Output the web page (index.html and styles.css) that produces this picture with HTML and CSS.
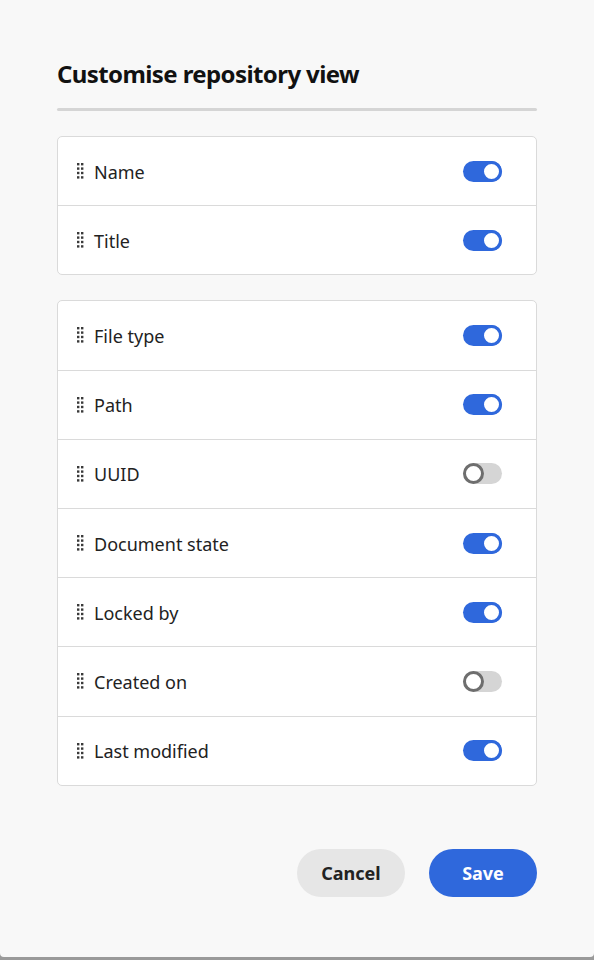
FILE: index.html
```html
<!DOCTYPE html>
<html lang="en">
<head>
<meta charset="utf-8">
<title>Customise repository view</title>
<link rel="stylesheet" href="styles.css">
</head>
<body>
<div class="dialog">
  <h1 class="title">Customise repository view</h1>
  <div class="divider"></div>
  <div class="list">
    <div class="row"><span class="handle"><svg width="7" height="16" viewBox="0 0 7 16"><g fill="#3a3a3a"><rect x="0" y="0" width="2.4" height="2.4"/><rect x="4" y="0" width="2.4" height="2.4"/><rect x="0" y="4.4" width="2.4" height="2.4"/><rect x="4" y="4.4" width="2.4" height="2.4"/><rect x="0" y="8.8" width="2.4" height="2.4"/><rect x="4" y="8.8" width="2.4" height="2.4"/><rect x="0" y="13.2" width="2.4" height="2.4"/><rect x="4" y="13.2" width="2.4" height="2.4"/></g></svg></span><span class="label">Name</span><span class="switch on"><span class="knob"></span></span></div>
    <div class="row"><span class="handle"><svg width="7" height="16" viewBox="0 0 7 16"><g fill="#3a3a3a"><rect x="0" y="0" width="2.4" height="2.4"/><rect x="4" y="0" width="2.4" height="2.4"/><rect x="0" y="4.4" width="2.4" height="2.4"/><rect x="4" y="4.4" width="2.4" height="2.4"/><rect x="0" y="8.8" width="2.4" height="2.4"/><rect x="4" y="8.8" width="2.4" height="2.4"/><rect x="0" y="13.2" width="2.4" height="2.4"/><rect x="4" y="13.2" width="2.4" height="2.4"/></g></svg></span><span class="label">Title</span><span class="switch on"><span class="knob"></span></span></div>
  </div>
  <div class="list">
    <div class="row"><span class="handle"><svg width="7" height="16" viewBox="0 0 7 16"><g fill="#3a3a3a"><rect x="0" y="0" width="2.4" height="2.4"/><rect x="4" y="0" width="2.4" height="2.4"/><rect x="0" y="4.4" width="2.4" height="2.4"/><rect x="4" y="4.4" width="2.4" height="2.4"/><rect x="0" y="8.8" width="2.4" height="2.4"/><rect x="4" y="8.8" width="2.4" height="2.4"/><rect x="0" y="13.2" width="2.4" height="2.4"/><rect x="4" y="13.2" width="2.4" height="2.4"/></g></svg></span><span class="label">File type</span><span class="switch on"><span class="knob"></span></span></div>
    <div class="row"><span class="handle"><svg width="7" height="16" viewBox="0 0 7 16"><g fill="#3a3a3a"><rect x="0" y="0" width="2.4" height="2.4"/><rect x="4" y="0" width="2.4" height="2.4"/><rect x="0" y="4.4" width="2.4" height="2.4"/><rect x="4" y="4.4" width="2.4" height="2.4"/><rect x="0" y="8.8" width="2.4" height="2.4"/><rect x="4" y="8.8" width="2.4" height="2.4"/><rect x="0" y="13.2" width="2.4" height="2.4"/><rect x="4" y="13.2" width="2.4" height="2.4"/></g></svg></span><span class="label">Path</span><span class="switch on"><span class="knob"></span></span></div>
    <div class="row"><span class="handle"><svg width="7" height="16" viewBox="0 0 7 16"><g fill="#3a3a3a"><rect x="0" y="0" width="2.4" height="2.4"/><rect x="4" y="0" width="2.4" height="2.4"/><rect x="0" y="4.4" width="2.4" height="2.4"/><rect x="4" y="4.4" width="2.4" height="2.4"/><rect x="0" y="8.8" width="2.4" height="2.4"/><rect x="4" y="8.8" width="2.4" height="2.4"/><rect x="0" y="13.2" width="2.4" height="2.4"/><rect x="4" y="13.2" width="2.4" height="2.4"/></g></svg></span><span class="label">UUID</span><span class="switch"><span class="knob"></span></span></div>
    <div class="row"><span class="handle"><svg width="7" height="16" viewBox="0 0 7 16"><g fill="#3a3a3a"><rect x="0" y="0" width="2.4" height="2.4"/><rect x="4" y="0" width="2.4" height="2.4"/><rect x="0" y="4.4" width="2.4" height="2.4"/><rect x="4" y="4.4" width="2.4" height="2.4"/><rect x="0" y="8.8" width="2.4" height="2.4"/><rect x="4" y="8.8" width="2.4" height="2.4"/><rect x="0" y="13.2" width="2.4" height="2.4"/><rect x="4" y="13.2" width="2.4" height="2.4"/></g></svg></span><span class="label">Document state</span><span class="switch on"><span class="knob"></span></span></div>
    <div class="row"><span class="handle"><svg width="7" height="16" viewBox="0 0 7 16"><g fill="#3a3a3a"><rect x="0" y="0" width="2.4" height="2.4"/><rect x="4" y="0" width="2.4" height="2.4"/><rect x="0" y="4.4" width="2.4" height="2.4"/><rect x="4" y="4.4" width="2.4" height="2.4"/><rect x="0" y="8.8" width="2.4" height="2.4"/><rect x="4" y="8.8" width="2.4" height="2.4"/><rect x="0" y="13.2" width="2.4" height="2.4"/><rect x="4" y="13.2" width="2.4" height="2.4"/></g></svg></span><span class="label">Locked by</span><span class="switch on"><span class="knob"></span></span></div>
    <div class="row"><span class="handle"><svg width="7" height="16" viewBox="0 0 7 16"><g fill="#3a3a3a"><rect x="0" y="0" width="2.4" height="2.4"/><rect x="4" y="0" width="2.4" height="2.4"/><rect x="0" y="4.4" width="2.4" height="2.4"/><rect x="4" y="4.4" width="2.4" height="2.4"/><rect x="0" y="8.8" width="2.4" height="2.4"/><rect x="4" y="8.8" width="2.4" height="2.4"/><rect x="0" y="13.2" width="2.4" height="2.4"/><rect x="4" y="13.2" width="2.4" height="2.4"/></g></svg></span><span class="label">Created on</span><span class="switch"><span class="knob"></span></span></div>
    <div class="row"><span class="handle"><svg width="7" height="16" viewBox="0 0 7 16"><g fill="#3a3a3a"><rect x="0" y="0" width="2.4" height="2.4"/><rect x="4" y="0" width="2.4" height="2.4"/><rect x="0" y="4.4" width="2.4" height="2.4"/><rect x="4" y="4.4" width="2.4" height="2.4"/><rect x="0" y="8.8" width="2.4" height="2.4"/><rect x="4" y="8.8" width="2.4" height="2.4"/><rect x="0" y="13.2" width="2.4" height="2.4"/><rect x="4" y="13.2" width="2.4" height="2.4"/></g></svg></span><span class="label">Last modified</span><span class="switch on"><span class="knob"></span></span></div>
  </div>
  <div class="actions">
    <button class="btn secondary">Cancel</button>
    <button class="btn primary">Save</button>
  </div>
</div>
</body>
</html>
```

FILE: styles.css
```css
html, body {
  margin: 0;
  padding: 0;
}
body {
  background: #9a9a9a;
  width: 594px;
  height: 960px;
  overflow: hidden;
  font-family: "Noto Sans", "Open Sans", sans-serif;
  color: #222;
}
.dialog {
  box-sizing: border-box;
  width: 594px;
  height: 957px;
  background: #f8f8f8;
  border-radius: 0 0 4px 4px;
  padding: 54px 57px 0;
  display: flex;
  flex-direction: column;
}
.title {
  margin: 0;
  font-size: 24px;
  line-height: 40px;
  font-weight: 700;
  color: #111;
  letter-spacing: -0.6px;
}
.divider {
  height: 3px;
  background: #d5d5d5;
  border-radius: 2px;
  margin-top: 14px;
  margin-bottom: 25px;
}
.list {
  background: #fff;
  border: 1px solid #dadada;
  border-radius: 5px;
  margin-bottom: 25px;
}
.row {
  height: 68.2px;
  display: flex;
  align-items: center;
  padding: 0 34px 0 19px;
  border-top: 1px solid #dadada;
}
.row:first-child {
  border-top: none;
}
.handle {
  display: flex;
  width: 7px;
  margin-right: 10px;
}
.label {
  flex: 1;
  font-size: 18px;
  color: #222;
  padding-top: 1px;
}
.switch {
  position: relative;
  width: 39px;
  height: 21px;
  border-radius: 11px;
  background: #d5d5d5;
}
.knob {
  position: absolute;
  top: 0;
  left: 0;
  box-sizing: border-box;
  width: 21px;
  height: 21px;
  border-radius: 50%;
  background: #fff;
  border: 3px solid #6e6e6e;
}
.switch.on {
  background: #2f68dc;
}
.switch.on .knob {
  left: 18px;
  border-color: #2f68dc;
}
.actions {
  margin-top: 38px;
  display: flex;
  justify-content: flex-end;
  gap: 24px;
}
.btn {
  width: 108px;
  height: 48px;
  border: none;
  border-radius: 24px;
  font-family: "Noto Sans", "Open Sans", sans-serif;
  font-size: 18px;
  font-weight: 700;
  padding: 0;
}
.btn.secondary {
  background: #e6e6e6;
  color: #222;
}
.btn.primary {
  background: #2f68dc;
  color: #fff;
}
```
